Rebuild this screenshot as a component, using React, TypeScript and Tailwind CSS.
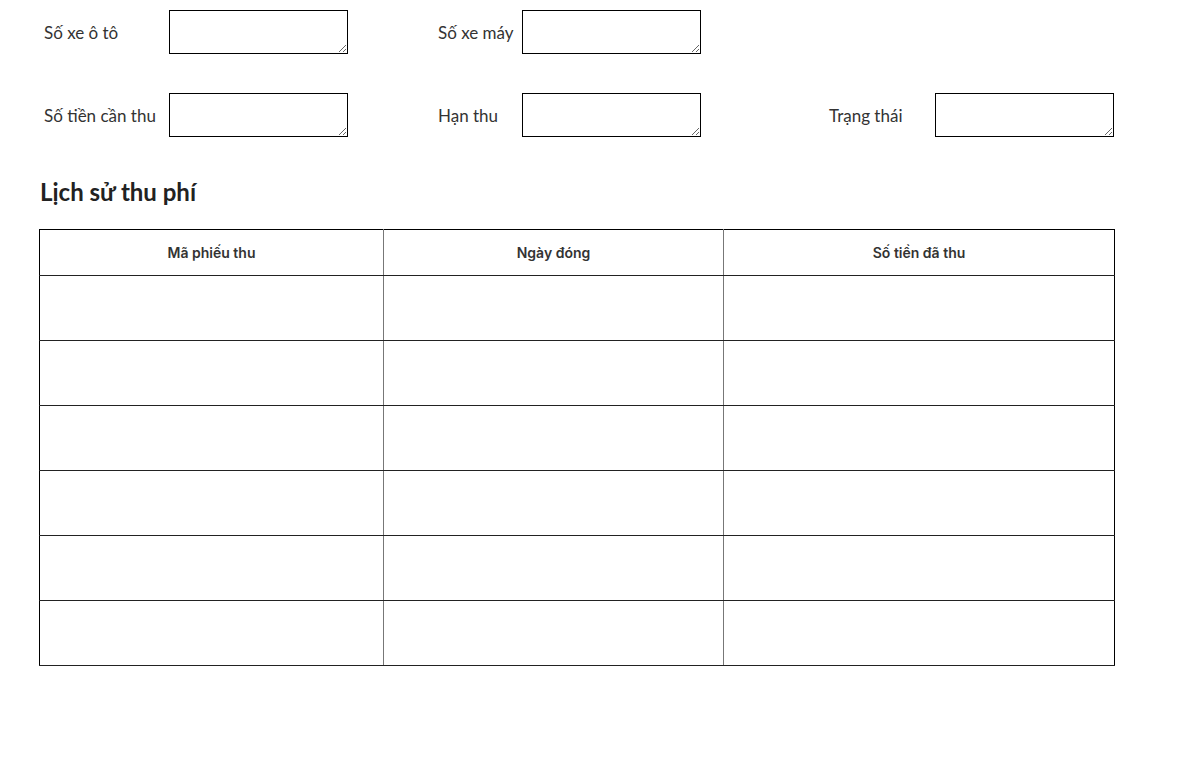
import React from "react";

const Field = ({ label, labelW }: { label: string; labelW: string }) => (
  <div className="flex items-center">
    <div className={`${labelW} text-[17px] text-[#333] leading-none`}>{label}</div>
    <textarea className="block w-[179px] h-[44px] border border-black bg-white" />
  </div>
);

export default function App() {
  const rows = [0, 1, 2, 3, 4, 5];
  return (
    <div className="w-[1178px] h-[765px] bg-white" style={{ fontFamily: "Lato, 'Noto Sans', sans-serif" }}>
      <div className="pt-[10px] pl-[44px] flex flex-col gap-[39px]">
        <div className="flex">
          <Field label="Số xe ô tô" labelW="w-[125px]" />
          <div className="w-[90px]" />
          <Field label="Số xe máy" labelW="w-[84px]" />
        </div>
        <div className="flex">
          <Field label="Số tiền cần thu" labelW="w-[125px]" />
          <div className="w-[90px]" />
          <Field label="Hạn thu" labelW="w-[84px]" />
          <div className="w-[128px]" />
          <Field label="Trạng thái" labelW="w-[106px]" />
        </div>
      </div>
      <h2 className="ml-[40px] mt-[40px] text-[24px] font-bold text-[#222] leading-[30px]">Lịch sử thu phí</h2>
      <table
        className="ml-[39px] mt-[22px] border-collapse border border-black table-fixed w-[1075px]"
        style={{ fontFamily: "Inter, 'Noto Sans', sans-serif" }}
      >
        <colgroup>
          <col className="w-[344px]" />
          <col className="w-[340px]" />
          <col className="w-[391px]" />
        </colgroup>
        <thead>
          <tr className="h-[46px]">
            <th className="border-b border-[#222] border-r border-r-[#777] text-[14px] font-semibold text-[#333]">Mã phiếu thu</th>
            <th className="border-b border-[#222] border-r border-r-[#777] text-[14px] font-semibold text-[#333]">Ngày đóng</th>
            <th className="border-b border-[#222] text-[14px] font-semibold text-[#333]">Số tiền đã thu</th>
          </tr>
        </thead>
        <tbody>
          {rows.map((r) => (
            <tr key={r} className="h-[65px]">
              <td className="border-b border-[#222] border-r border-r-[#777]"></td>
              <td className="border-b border-[#222] border-r border-r-[#777]"></td>
              <td className="border-b border-[#222]"></td>
            </tr>
          ))}
        </tbody>
      </table>
    </div>
  );
}
